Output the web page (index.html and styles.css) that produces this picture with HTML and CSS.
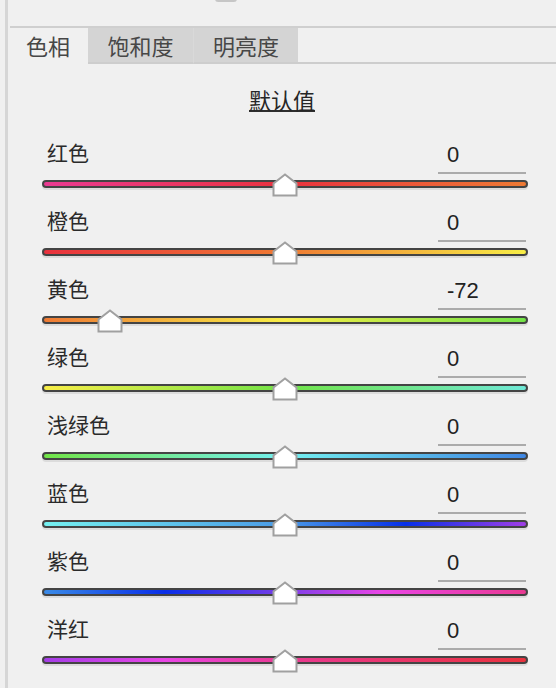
FILE: index.html
```html
<!DOCTYPE html>
<html lang="zh-CN">
<head>
    <meta charset="UTF-8">
    <meta name="viewport" content="width=device-width, initial-scale=1.0">
    <title>HSL 调整</title>
    <link rel="stylesheet" href="styles.css">
</head>
<body>

    <div class="panel">
        <div class="topbar">
            <span class="check"></span>
        </div>

        <div class="tabs">
            <div class="tab active">色相</div>
            <div class="tab">饱和度</div>
            <div class="tab">明亮度</div>
            <div class="tab-fill"></div>
        </div>

        <div class="defaults">
            <span class="defaults-link">默认值</span>
        </div>

        <div class="row">
            <div class="row-head">
                <span class="label">红色</span>
                <span class="value">0</span>
            </div>
            <div class="track-wrap">
                <div class="track hue-red"></div>
                <svg class="thumb" style="left: 50%;" width="26" height="24" viewBox="0 0 26 24"><path d="M1.5 22.5 V10.5 L13 1.5 L24.5 10.5 V22.5 Z" fill="#fff" stroke="#a0a0a0" stroke-width="2"/></svg>
            </div>
        </div>

        <div class="row">
            <div class="row-head">
                <span class="label">橙色</span>
                <span class="value">0</span>
            </div>
            <div class="track-wrap">
                <div class="track hue-orange"></div>
                <svg class="thumb" style="left: 50%;" width="26" height="24" viewBox="0 0 26 24"><path d="M1.5 22.5 V10.5 L13 1.5 L24.5 10.5 V22.5 Z" fill="#fff" stroke="#a0a0a0" stroke-width="2"/></svg>
            </div>
        </div>

        <div class="row">
            <div class="row-head">
                <span class="label">黄色</span>
                <span class="value">-72</span>
            </div>
            <div class="track-wrap">
                <div class="track hue-yellow"></div>
                <svg class="thumb" style="left: 14%;" width="26" height="24" viewBox="0 0 26 24"><path d="M1.5 22.5 V10.5 L13 1.5 L24.5 10.5 V22.5 Z" fill="#fff" stroke="#a0a0a0" stroke-width="2"/></svg>
            </div>
        </div>

        <div class="row">
            <div class="row-head">
                <span class="label">绿色</span>
                <span class="value">0</span>
            </div>
            <div class="track-wrap">
                <div class="track hue-green"></div>
                <svg class="thumb" style="left: 50%;" width="26" height="24" viewBox="0 0 26 24"><path d="M1.5 22.5 V10.5 L13 1.5 L24.5 10.5 V22.5 Z" fill="#fff" stroke="#a0a0a0" stroke-width="2"/></svg>
            </div>
        </div>

        <div class="row">
            <div class="row-head">
                <span class="label">浅绿色</span>
                <span class="value">0</span>
            </div>
            <div class="track-wrap">
                <div class="track hue-aqua"></div>
                <svg class="thumb" style="left: 50%;" width="26" height="24" viewBox="0 0 26 24"><path d="M1.5 22.5 V10.5 L13 1.5 L24.5 10.5 V22.5 Z" fill="#fff" stroke="#a0a0a0" stroke-width="2"/></svg>
            </div>
        </div>

        <div class="row">
            <div class="row-head">
                <span class="label">蓝色</span>
                <span class="value">0</span>
            </div>
            <div class="track-wrap">
                <div class="track hue-blue"></div>
                <svg class="thumb" style="left: 50%;" width="26" height="24" viewBox="0 0 26 24"><path d="M1.5 22.5 V10.5 L13 1.5 L24.5 10.5 V22.5 Z" fill="#fff" stroke="#a0a0a0" stroke-width="2"/></svg>
            </div>
        </div>

        <div class="row">
            <div class="row-head">
                <span class="label">紫色</span>
                <span class="value">0</span>
            </div>
            <div class="track-wrap">
                <div class="track hue-purple"></div>
                <svg class="thumb" style="left: 50%;" width="26" height="24" viewBox="0 0 26 24"><path d="M1.5 22.5 V10.5 L13 1.5 L24.5 10.5 V22.5 Z" fill="#fff" stroke="#a0a0a0" stroke-width="2"/></svg>
            </div>
        </div>

        <div class="row">
            <div class="row-head">
                <span class="label">洋红</span>
                <span class="value">0</span>
            </div>
            <div class="track-wrap">
                <div class="track hue-magenta"></div>
                <svg class="thumb" style="left: 50%;" width="26" height="24" viewBox="0 0 26 24"><path d="M1.5 22.5 V10.5 L13 1.5 L24.5 10.5 V22.5 Z" fill="#fff" stroke="#a0a0a0" stroke-width="2"/></svg>
            </div>
        </div>
    </div>

</body>
</html>
```

FILE: styles.css
```css
body {
    margin: 0;
    padding: 0;
    background-color: #f0f0f0;
    font-family: "Noto Sans CJK SC", "Noto Sans", sans-serif;
    color: #2a2a2a;
    overflow: hidden;
}

.panel {
    margin-left: 5px;
    border-left: 3px solid #d6d6d6;
    height: 688px;
}

/* bande du haut, on ne voit que le bas de la case */
.topbar {
    display: flex;
    align-items: flex-start;
    height: 26px;
    padding-left: 205px;
    border-bottom: 2px solid #cfcfcf;
    margin-left: 2px;
}

.check {
    width: 22px;
    height: 12px;
    margin-top: -10px;
    background-color: #c6c6c6;
    border-radius: 3px;
}

.tabs {
    display: flex;
    height: 36px;
}

.tab {
    display: flex;
    align-items: center;
    justify-content: center;
    height: 34px;
    font-size: 22px;
    line-height: 22px;
    color: #474747;
    background-color: #d4d4d4;
    border-bottom: 2px solid #cdcdcd;
    width: 105px;
}

.tab + .tab {
    border-left: 1px solid #d9d9d9;
    width: 104px;
}

.tab.active {
    width: 80px;
    background-color: #f0f0f0;
    border-bottom-color: #f0f0f0;
}

.tab.active + .tab {
    border-left: none;
    width: 105px;
}

.tab-fill {
    flex: 1;
    border-bottom: 2px solid #cdcdcd;
}

.defaults {
    text-align: center;
    padding-top: 24px;
    padding-bottom: 28px;
    height: 24px;
}

.defaults-link {
    display: inline-block;
    font-size: 22px;
    line-height: 22px;
    color: #262626;
    border-bottom: 2px solid #2e2e2e;
}

.row {
    height: 68px;
    padding-left: 34px;
    padding-right: 28px;
}

.row-head {
    display: flex;
    justify-content: space-between;
    align-items: flex-start;
    height: 34px;
}

.label {
    padding-left: 5px;
    font-size: 21px;
    line-height: 24px;
}

.value {
    margin-top: 2px;
    margin-right: 2px;
    width: 79px;
    padding-left: 9px;
    padding-bottom: 4px;
    font-family: "Liberation Sans", Arial, sans-serif;
    font-size: 22px;
    line-height: 26px;
    color: #222;
    border-bottom: 2px solid #ababab;
}

.track-wrap {
    position: relative;
    margin-top: 6px;
    height: 8px;
}

.track {
    height: 4px;
    border: 2px solid #444;
    border-radius: 4px;
    box-shadow: 0 2px 0 #dcdcdc;
}

.thumb {
    position: absolute;
    top: -7px;
    margin-left: -13px;
}

.hue-red {
    background: linear-gradient(to right, #e93a92, #e9323e 50%, #ee7a34);
}

.hue-orange {
    background: linear-gradient(to right, #e9323e, #ef7a33 50%, #f8ee47);
}

.hue-yellow {
    background: linear-gradient(to right, #ee7a34, #f8ee47 50%, #72e447);
}

.hue-green {
    background: linear-gradient(to right, #f8ee47, #72e447 50%, #6ee8d6);
}

.hue-aqua {
    background: linear-gradient(to right, #72e447, #74f0f0 50%, #3f86e3);
}

.hue-blue {
    background: linear-gradient(to right, #74f0f0, #4a9ae6 50%, #0730e8 75%, #a03ee6);
}

.hue-purple {
    background: linear-gradient(to right, #3a8ae6, #0a2fe8 25%, #7a3ee8 50%, #e946e6 70%, #e93a92);
}

.hue-magenta {
    background: linear-gradient(to right, #a43ee6, #e946e6 25%, #e93a92 50%, #e9323e);
}
```
